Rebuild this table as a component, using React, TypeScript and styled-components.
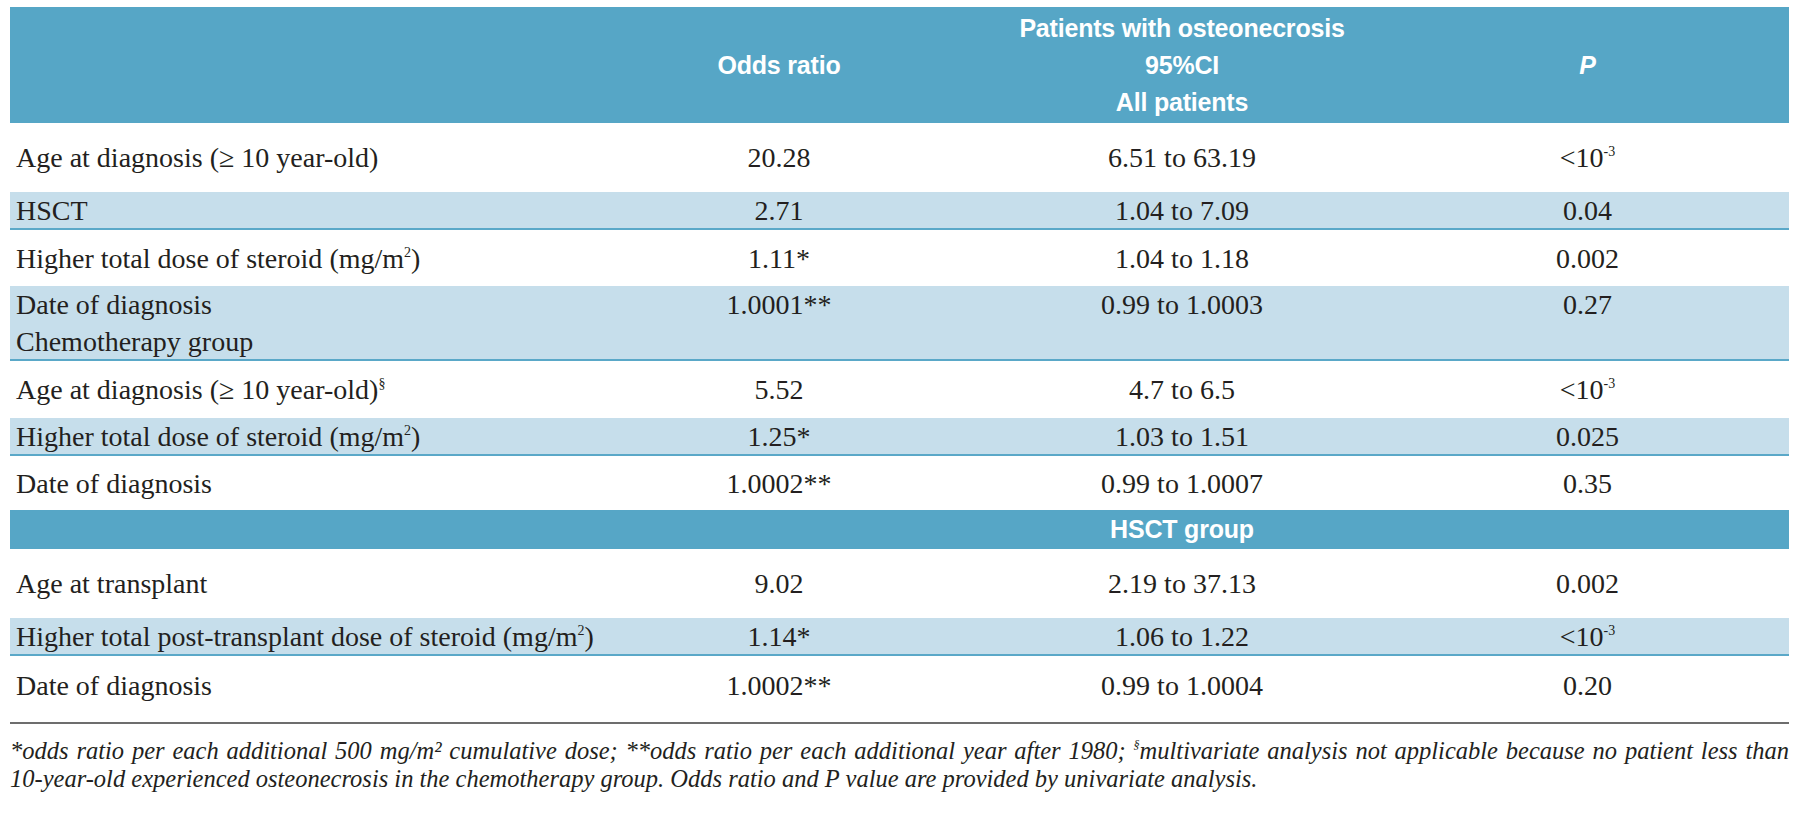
import React from 'react';
import styled, { createGlobalStyle } from 'styled-components';

const GlobalStyle = createGlobalStyle`
  html, body {
    margin: 0;
    background: #ffffff;
  }
  body {
    font-family: "Liberation Serif", "Times New Roman", serif;
    color: #231f20;
  }
`;

const COLS = '570px 398px 408px 403px';

const Page = styled.div`
  width: 1779px;
  padding: 7px 11px 0 10px;
`;

const HeaderBand = styled.div`
  display: grid;
  grid-template-columns: ${COLS};
  align-items: center;
  height: 116px;
  background: #56a6c6;
  color: #ffffff;
  font-family: "Liberation Sans", Arial, sans-serif;
  font-weight: 700;
  font-size: 25px;
  line-height: 37px;
  letter-spacing: -0.2px;
`;

const HeadCell = styled.div<{ $italic?: boolean }>`
  text-align: center;
  white-space: nowrap;
  font-style: ${(p) => (p.$italic ? 'italic' : 'normal')};
`;

const tones = {
  white: '#ffffff',
  light: '#c6deeb',
  dark: '#56a6c6',
};

const Row = styled.div<{ $tone: keyof typeof tones; $h: number; $rule?: boolean; $top?: boolean }>`
  display: grid;
  grid-template-columns: ${COLS};
  align-items: ${(p) => (p.$top ? 'start' : 'center')};
  box-sizing: border-box;
  height: ${(p) => p.$h}px;
  background: ${(p) => tones[p.$tone]};
  border-bottom: ${(p) => (p.$rule ? '2px solid #5aa8c8' : 'none')};
  font-size: 28px;
  line-height: 37px;
`;

const Label = styled.div`
  padding-left: 6px;
  white-space: nowrap;
`;

const Value = styled.div`
  text-align: center;
  white-space: nowrap;
`;

const GroupTitle = styled.div`
  grid-column: 3;
  text-align: center;
  color: #ffffff;
  font-family: "Liberation Sans", Arial, sans-serif;
  font-weight: 700;
  font-size: 25px;
  letter-spacing: -0.2px;
`;

const Sup = styled.sup`
  font-size: 0.5em;
  vertical-align: 0.8em;
  line-height: 0;
`;

const Notes = styled.div`
  margin-top: 8px;
  border-top: 2px solid #6d6d6d;
  padding-top: 13px;
  font-style: italic;
  font-size: 24.5px;
  line-height: 28px;
`;

const JustifiedLine = styled.div`
  text-align: justify;
  text-align-last: justify;
  white-space: nowrap;
`;

type Tone = keyof typeof tones;

interface Entry {
  label: React.ReactNode;
  odds?: string;
  ci?: string;
  p?: React.ReactNode;
  tone: Tone;
  h: number;
  rule?: boolean;
  top?: boolean;
}

const lessThan = (
  <>
    &lt;10<Sup>-3</Sup>
  </>
);

const mgm2 = (
  <>
    (mg/m<Sup>2</Sup>)
  </>
);

const firstBlock: Entry[] = [
  { label: 'Age at diagnosis (≥ 10 year-old)', odds: '20.28', ci: '6.51 to 63.19', p: lessThan, tone: 'white', h: 69 },
  { label: 'HSCT', odds: '2.71', ci: '1.04 to 7.09', p: '0.04', tone: 'light', h: 38, rule: true },
  { label: <>Higher total dose of steroid {mgm2}</>, odds: '1.11*', ci: '1.04 to 1.18', p: '0.002', tone: 'white', h: 56 },
  {
    label: (
      <>
        Date of diagnosis
        <br />
        Chemotherapy group
      </>
    ),
    odds: '1.0001**',
    ci: '0.99 to 1.0003',
    p: '0.27',
    tone: 'light',
    h: 75,
    rule: true,
    top: true,
  },
  { label: <>Age at diagnosis (≥ 10 year-old)<Sup>§</Sup></>, odds: '5.52', ci: '4.7 to 6.5', p: lessThan, tone: 'white', h: 57 },
  { label: <>Higher total dose of steroid {mgm2}</>, odds: '1.25*', ci: '1.03 to 1.51', p: '0.025', tone: 'light', h: 38, rule: true },
  { label: 'Date of diagnosis', odds: '1.0002**', ci: '0.99 to 1.0007', p: '0.35', tone: 'white', h: 54 },
];

const hsctBlock: Entry[] = [
  { label: 'Age at transplant', odds: '9.02', ci: '2.19 to 37.13', p: '0.002', tone: 'white', h: 69 },
  { label: <>Higher total post-transplant dose of steroid {mgm2}</>, odds: '1.14*', ci: '1.06 to 1.22', p: lessThan, tone: 'light', h: 38, rule: true },
  { label: 'Date of diagnosis', odds: '1.0002**', ci: '0.99 to 1.0004', p: '0.20', tone: 'white', h: 58 },
];

function DataRow({ e }: { e: Entry }) {
  return (
    <Row $tone={e.tone} $h={e.h} $rule={e.rule} $top={e.top}>
      <Label>{e.label}</Label>
      <Value>{e.odds}</Value>
      <Value>{e.ci}</Value>
      <Value>{e.p}</Value>
    </Row>
  );
}

export default function App() {
  return (
    <>
      <GlobalStyle />
      <Page>
        <HeaderBand>
          <div />
          <HeadCell>Odds ratio</HeadCell>
          <HeadCell>
            Patients with osteonecrosis
            <br />
            95%CI
            <br />
            All patients
          </HeadCell>
          <HeadCell $italic>P</HeadCell>
        </HeaderBand>
        {firstBlock.map((e, i) => (
          <DataRow key={'a' + i} e={e} />
        ))}
        <Row $tone="dark" $h={39}>
          <GroupTitle>HSCT group</GroupTitle>
        </Row>
        {hsctBlock.map((e, i) => (
          <DataRow key={'b' + i} e={e} />
        ))}
        <Notes>
          <JustifiedLine>
            *odds ratio per each additional 500 mg/m² cumulative dose; **odds ratio per each additional year after 1980;{' '}
            <Sup>§</Sup>multivariate analysis not applicable because no patient less than
          </JustifiedLine>
          <div>
            10-year-old experienced osteonecrosis in the chemotherapy group. Odds ratio and P value are provided by
            univariate analysis.
          </div>
        </Notes>
      </Page>
    </>
  );
}
